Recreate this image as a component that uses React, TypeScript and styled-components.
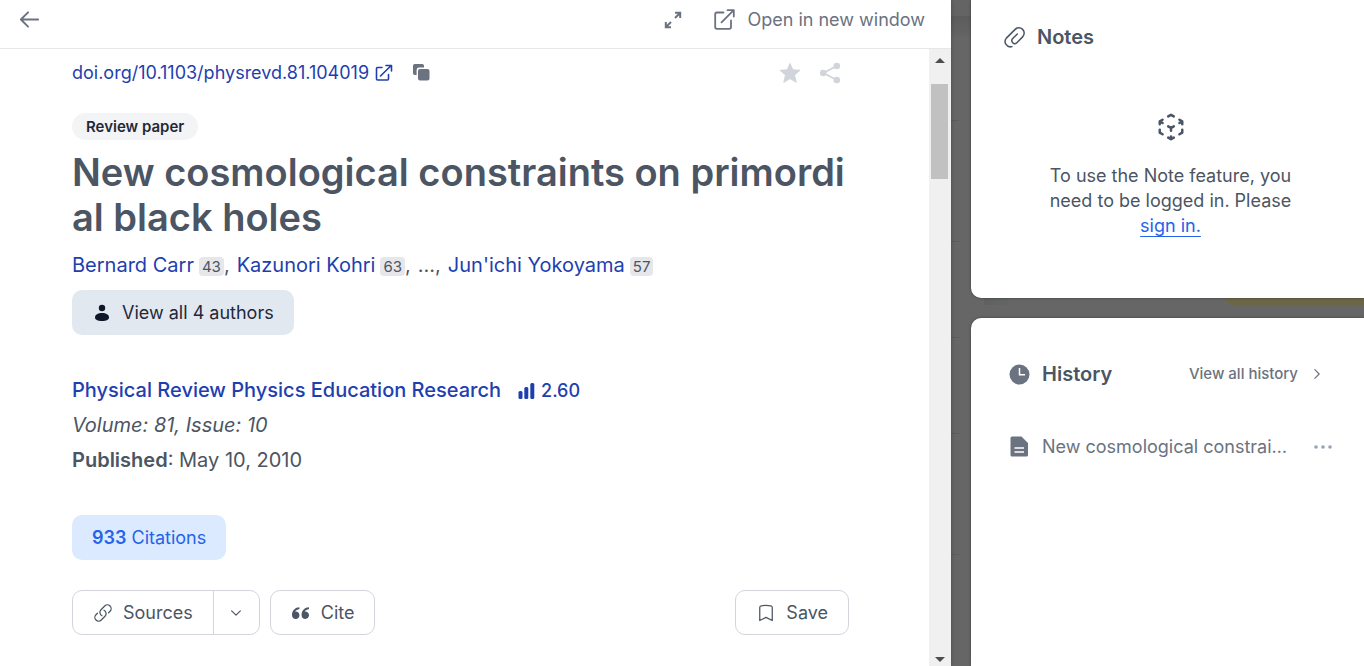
import React from "react";
import styled, { createGlobalStyle, css } from "styled-components";
import {
  HiOutlineArrowLeft,
  HiOutlineBookmark,
  HiOutlineChevronDown,
  HiOutlineChevronRight,
  HiOutlineCubeTransparent,
  HiOutlineLink,
} from "react-icons/hi2";
import { ImQuotesLeft } from "react-icons/im";

const color = {
  text: "#4b5563",
  muted: "#6b7280",
  faint: "#d1d5db",
  link: "#1e40af",
  blue: "#2563eb",
  backdrop: "#666666",
};

const GlobalStyle = createGlobalStyle`
  *, *::before, *::after { box-sizing: border-box; }
  body {
    margin: 0;
    background: ${color.backdrop};
    color: ${color.text};
    font-family: Inter, "Liberation Sans", sans-serif;
    font-size: 18px;
    line-height: 25px;
  }
  h1, h2, p, ul { margin: 0; padding: 0; }
  ul { list-style: none; }
  a { color: inherit; text-decoration: none; }
  button { font: inherit; color: inherit; cursor: pointer; }
  svg { display: block; flex: none; }
`;

const Page = styled.div`
  position: relative;
  height: 100vh;
  overflow: hidden;
`;

const Backdrop = styled.div`
  position: absolute;
  inset: 0;
`;

const BackdropHeader = styled.div`
  height: 36px;
  border-top: 16px solid #646464;
  background: linear-gradient(#5c5c5c, #636464);
`;

const BackdropBody = styled.div`
  display: grid;
  grid-template-columns: minmax(0, 1fr) 380px;
`;

const BackdropRows = styled.div`
  margin-right: 25px;
`;

const BackdropRow = styled.div<{ $height: number }>`
  height: ${(p) => p.$height}px;
  border-bottom: 1px solid #5c5c5c;
`;

const BackdropAside = styled.div`
  display: flex;
  justify-content: flex-end;
  align-items: flex-end;
  height: 269px;
  background: linear-gradient(90deg, #606060, #636565 24px, #666666 25px);
`;

const BackdropBanner = styled.div`
  width: 141px;
  height: 44px;
  border-radius: 12px 0 0 12px;
  background: #6b6746;
`;

const Layout = styled.div`
  position: relative;
  display: grid;
  grid-template-columns: minmax(0, 1fr) 393px;
  gap: 20px;
  height: 100%;
`;

const Reader = styled.main`
  display: flex;
  flex-direction: column;
  min-height: 0;
  background: #fff;
  box-shadow: 0 0 4px rgba(0, 0, 0, 0.3);
`;

const TopBar = styled.header`
  display: flex;
  flex: none;
  align-items: center;
  justify-content: space-between;
  height: 49px;
  padding: 0 26px 9px 18px;
  border-bottom: 1px solid #e5e7eb;
  color: ${color.muted};
`;

const TopActions = styled.div`
  display: flex;
  align-items: center;
  gap: 32px;
`;

const IconButton = styled.button<{ $color?: string }>`
  display: flex;
  align-items: center;
  padding: 0;
  border: 0;
  background: none;
  color: ${(p) => p.$color ?? "inherit"};
`;

const WindowLink = styled.a`
  display: flex;
  align-items: center;
  gap: 12px;
`;

const ReaderBody = styled.div`
  display: flex;
  flex: 1;
  min-height: 0;
`;

const Article = styled.article`
  flex: 1;
  min-width: 0;
  overflow: hidden;
  padding: 11px 80px 0 72px;
`;

const ScrollTrack = styled.div`
  display: flex;
  flex-direction: column;
  align-items: center;
  width: 22px;
  padding: 9px 3px 4px 2px;
  background: #f0f0f0;
`;

const ScrollThumb = styled.div`
  width: 17px;
  height: 95px;
  margin: 21px 0 auto;
  background: #c1c1c1;
`;

const ScrollArrow = styled.div<{ $down?: boolean }>`
  border: 5px solid transparent;
  ${(p) =>
    p.$down
      ? css`border-top-color: #4d4d4d; border-bottom-width: 0;`
      : css`border-bottom-color: #4d4d4d; border-top-width: 0;`}
`;

const DoiRow = styled.div`
  display: flex;
  align-items: center;
  justify-content: space-between;
  padding-right: 8px;
`;

const Inline = styled.div<{ $gap: number }>`
  display: flex;
  align-items: center;
  gap: ${(p) => p.$gap}px;
`;

const DoiLink = styled.a`
  display: flex;
  align-items: center;
  gap: 6px;
  color: ${color.link};
`;

const Tools = styled.div`
  display: flex;
  gap: 18px;
  color: ${color.faint};
`;

const Tag = styled.span`
  display: inline-block;
  margin-top: 28px;
  padding: 0 14px;
  border-radius: 14px;
  background: #f3f4f6;
  color: #1f2937;
  font-size: 15px;
  font-weight: 600;
  line-height: 27px;
  vertical-align: top;
`;

const Title = styled.h1`
  margin-top: 10px;
  font-size: 38px;
  font-weight: 600;
  line-height: 45px;
  word-break: break-all;
`;

const Authors = styled.p`
  display: flex;
  align-items: center;
  margin-top: 10px;
  font-size: 20px;
  line-height: 30px;
`;

const Author = styled.a`
  color: ${color.link};
`;

const Count = styled.span`
  margin: 2px 0 0 5px;
  padding: 0 3px;
  border-radius: 4px;
  background: #e5e7eb;
  font-size: 15px;
  line-height: 19px;
`;

const Separator = styled.span`
  margin-right: 7px;
`;

const Button = styled.button<{ $tone?: "slate" | "blue" }>`
  display: flex;
  align-items: center;
  gap: 10px;
  height: 45px;
  padding: 0 20px;
  border: 1px solid ${color.faint};
  border-radius: 10px;
  background: #fff;
  ${(p) =>
    p.$tone === "slate" &&
    css`
      margin-top: 10px;
      border: 0;
      background: #e2e8f0;
      color: #1e293b;
    `}
  ${(p) =>
    p.$tone === "blue" &&
    css`
      margin-top: 37px;
      border: 0;
      background: #dbeafe;
      color: ${color.blue};
    `}
`;

const IconSlot = styled.span`
  display: flex;
  justify-content: center;
  width: 20px;
`;

const Strong = styled.strong`
  font-weight: 600;
`;

const Journal = styled.div`
  margin-top: 38px;
  font-size: 20px;
  line-height: 35px;
`;

const JournalRow = styled.div`
  display: flex;
  align-items: center;
  gap: 17px;
  color: ${color.link};
  font-weight: 500;
`;

const Impact = styled.span`
  display: flex;
  align-items: center;
  gap: 6px;
  font-size: 18px;
`;

const Actions = styled.div`
  display: flex;
  justify-content: space-between;
  margin-top: 30px;
`;

const Split = styled.div`
  display: flex;
`;

const SourcesButton = styled(Button)`
  border-radius: 10px 0 0 10px;
`;

const MoreButton = styled(Button)`
  width: 47px;
  justify-content: center;
  margin-left: -1px;
  padding: 0;
  border-radius: 0 10px 10px 0;
`;

const Side = styled.aside`
  display: flex;
  flex-direction: column;
  gap: 20px;
  min-height: 0;
`;

const Panel = styled.section<{ $bottom?: boolean }>`
  background: #fff;
  box-shadow: 0 0 3px rgba(0, 0, 0, 0.4);
  ${(p) =>
    p.$bottom
      ? css`flex: 1; padding: 41px 32px 0 38px; border-radius: 10px 0 0 0;`
      : css`padding: 22px 32px 60px; border-radius: 0 0 0 10px;`}
`;

const PanelHead = styled.div<{ $gap: number }>`
  display: flex;
  align-items: center;
  gap: ${(p) => p.$gap}px;
  line-height: 30px;
  color: ${color.muted};
`;

const PanelTitle = styled.h2`
  flex: 1;
  color: ${color.text};
  font-size: 20px;
  font-weight: 600;
`;

const SignInNote = styled.div`
  display: flex;
  flex-direction: column;
  align-items: center;
  gap: 21px;
  margin: 60px 18px 0 24px;
  text-align: center;
`;

const SignIn = styled.a`
  display: block;
  color: ${color.blue};
  text-decoration: underline;
  text-underline-offset: 4px;
`;

const HistoryLink = styled.a`
  display: flex;
  align-items: center;
  gap: 12px;
  margin-right: 8px;
  font-size: 15px;
  font-weight: 500;
`;

const HistoryItem = styled.li`
  display: flex;
  align-items: center;
  gap: 12px;
  margin-top: 45px;
  color: ${color.muted};
`;

const HistoryName = styled.a`
  width: 250px;
  overflow: hidden;
  white-space: nowrap;
  text-overflow: ellipsis;
`;

const MenuButton = styled(IconButton)`
  margin-left: auto;
`;

const stroke = { fill: "none", stroke: "currentColor", strokeLinecap: "round", strokeLinejoin: "round" } as const;

const ExpandIcon = () => (
  <svg width="18" height="18" viewBox="0 0 18 18" fill="none" stroke="currentColor" strokeWidth="2">
    <path d="M11 1.800H16.200V7M16 2 11 7M1.800 11V16.200H7M2 16 7 11" />
  </svg>
);

const WindowIcon = () => (
  <svg width="21" height="21" viewBox="0 0 21 21" {...stroke} strokeWidth="1.8">
    <path d="M9.500 3.500H3a1.800 1.800 0 0 0-1.800 1.800V18A1.800 1.800 0 0 0 3 19.800H15.200A1.800 1.800 0 0 0 17 18V11.500M7.500 13.300 19.500 1.300M13.500 1.200H19.800V7.500" />
  </svg>
);

const DoiIcon = () => (
  <svg width="18" height="18" viewBox="0 0 18 18" {...stroke} strokeWidth="1.6">
    <path d="M7 3.500H2.500A1 1 0 0 0 1.500 4.500V15A1 1 0 0 0 2.500 16H12.500A1 1 0 0 0 13.500 15V10.500M5.500 12 16.200 1.500M11 1.500H16.500V7" />
  </svg>
);

const CopyIcon = () => (
  <svg width="17" height="17" viewBox="0 0 17 17" fill="currentColor">
    <path d="M1.800 0H9.200A1.800 1.800 0 0 1 11 1.800V3.600H6A2.400 2.400 0 0 0 3.600 6V11H1.800A1.800 1.800 0 0 1 0 9.200V1.800A1.800 1.800 0 0 1 1.800 0Z" />
    <rect x="5" y="5" width="11.500" height="11.500" rx="2" />
  </svg>
);

const StarIcon = () => (
  <svg width="22" height="22" viewBox="0 0 22 22" fill="currentColor" stroke="currentColor" strokeLinejoin="round">
    <path d="M11 1.500 13.800 7.800 21 8.300 15.500 13 17.200 20.300 11 16.600 4.800 20.300 6.500 13 1 8.300 8.200 7.800Z" />
  </svg>
);

const ShareIcon = () => (
  <svg width="22" height="22" viewBox="0 0 22 22" fill="currentColor">
    <path d="M4.500 11 17.500 4M4.500 11 17.500 18" stroke="currentColor" strokeWidth="1.8" />
    <circle cx="4.200" cy="11" r="3.300" />
    <circle cx="17.800" cy="4" r="3.300" />
    <circle cx="17.800" cy="18" r="3.300" />
  </svg>
);

const PersonIcon = () => (
  <svg width="18" height="18" viewBox="0 0 18 18" fill="#0f172a">
    <circle cx="9" cy="4" r="3.200" />
    <path d="M2 13.500C2 10.500 5 9 9 9S16 10.500 16 13.500C16 15.800 13.500 17 9 17S2 15.800 2 13.500Z" />
  </svg>
);

const BarsIcon = () => (
  <svg width="17" height="19" viewBox="0 0 17 19" fill="currentColor">
    <rect x="0.500" y="10" width="4" height="8" rx="1.500" />
    <rect x="6.300" y="6" width="4" height="12" rx="1.500" />
    <rect x="12.300" y="2" width="4" height="16" rx="1.500" />
  </svg>
);

const ClipIcon = () => (
  <svg width="23" height="23" viewBox="-11.500 -11.500 23 23" {...stroke} strokeWidth="1.5" color={color.text}>
    <path
      transform="rotate(45)"
      d="M4.600 8.300A5.300 5.300 0 0 1-5.300 6.200V-6.200A5.300 5.300 0 0 1 5.300-6.200V2A2.900 2.900 0 0 1-0.500 2V-4.500"
    />
  </svg>
);

const ClockIcon = () => (
  <svg width="21" height="21" viewBox="0 0 21 21">
    <circle cx="10.500" cy="10.500" r="10" fill="currentColor" />
    <path d="M10.500 4V10.800H16" fill="none" stroke="#fff" strokeWidth="1.5" />
  </svg>
);

const DocumentIcon = () => (
  <svg width="21" height="21" viewBox="0 0 21 21">
    <path
      d="M3 0.500H12.500L19 7V19A1.500 1.500 0 0 1 17.500 20.500H3A1.500 1.500 0 0 1 1.500 19V2A1.500 1.500 0 0 1 3 0.500Z"
      fill="currentColor"
    />
    <path d="M5.500 12H15M5.500 16H15" stroke="#fff" strokeWidth="1.5" />
  </svg>
);

const DotsIcon = () => (
  <svg width="18" height="4" viewBox="0 0 18 4" fill="currentColor">
    <circle cx="2" cy="2" r="1.800" />
    <circle cx="9" cy="2" r="1.800" />
    <circle cx="16" cy="2" r="1.800" />
  </svg>
);

export default function App() {
  return (
    <Page>
      <GlobalStyle />
      <Backdrop aria-hidden="true">
        <BackdropHeader />
        <BackdropBody>
          <BackdropRows>
            {[85, 121, 96, 96, 121].map((height, i) => (
              <BackdropRow key={i} $height={height} />
            ))}
          </BackdropRows>
          <BackdropAside>
            <BackdropBanner />
          </BackdropAside>
        </BackdropBody>
      </Backdrop>
      <Layout>
        <Reader>
          <TopBar>
            <IconButton aria-label="Back">
              <HiOutlineArrowLeft size={23} strokeWidth={2} />
            </IconButton>
            <TopActions>
              <IconButton aria-label="Expand">
                <ExpandIcon />
              </IconButton>
              <WindowLink href="#window">
                <WindowIcon />
                Open in new window
              </WindowLink>
            </TopActions>
          </TopBar>
          <ReaderBody>
            <Article>
              <DoiRow>
                <Inline $gap={20}>
                  <DoiLink href="#doi">
                    doi.org/10.1103/physrevd.81.104019
                    <DoiIcon />
                  </DoiLink>
                  <IconButton aria-label="Copy" $color={color.muted}>
                    <CopyIcon />
                  </IconButton>
                </Inline>
                <Tools>
                  <IconButton aria-label="Favourite">
                    <StarIcon />
                  </IconButton>
                  <IconButton aria-label="Share">
                    <ShareIcon />
                  </IconButton>
                </Tools>
              </DoiRow>
              <Tag>Review paper</Tag>
              <Title>New cosmological constraints on primordial black holes</Title>
              <Authors>
                <Author href="#carr">Bernard Carr</Author>
                <Count>43</Count>
                <Separator>,</Separator>
                <Author href="#kohri">Kazunori Kohri</Author>
                <Count>63</Count>
                <Separator>,</Separator>
                <Separator>...,</Separator>
                <Author href="#yokoyama">Jun'ichi Yokoyama</Author>
                <Count>57</Count>
              </Authors>
              <Button $tone="slate">
                <IconSlot>
                  <PersonIcon />
                </IconSlot>
                View all 4 authors
              </Button>
              <Journal>
                <JournalRow>
                  <a href="#journal">Physical Review Physics Education Research</a>
                  <Impact>
                    <BarsIcon />
                    2.60
                  </Impact>
                </JournalRow>
                <p>
                  <em>Volume: 81, Issue: 10</em>
                </p>
                <p>
                  <Strong>Published</Strong>: May 10, 2010
                </p>
              </Journal>
              <Button $tone="blue">
                <span>
                  <Strong>933</Strong> Citations
                </span>
              </Button>
              <Actions>
                <Inline $gap={10}>
                  <Split>
                    <SourcesButton>
                      <HiOutlineLink size={20} />
                      Sources
                    </SourcesButton>
                    <MoreButton aria-label="More sources">
                      <HiOutlineChevronDown size={14} strokeWidth={2} />
                    </MoreButton>
                  </Split>
                  <Button>
                    <IconSlot>
                      <ImQuotesLeft size={17} />
                    </IconSlot>
                    Cite
                  </Button>
                </Inline>
                <Button>
                  <HiOutlineBookmark size={20} />
                  Save
                </Button>
              </Actions>
            </Article>
            <ScrollTrack aria-hidden="true">
              <ScrollArrow />
              <ScrollThumb />
              <ScrollArrow $down />
            </ScrollTrack>
          </ReaderBody>
        </Reader>
        <Side>
          <Panel>
            <PanelHead $gap={11}>
              <ClipIcon />
              <PanelTitle>Notes</PanelTitle>
            </PanelHead>
            <SignInNote>
              <HiOutlineCubeTransparent size={30} strokeWidth={2} />
              <p>
                To use the Note feature, you need to be logged in. Please <SignIn href="#signin">sign in.</SignIn>
              </p>
            </SignInNote>
          </Panel>
          <Panel $bottom>
            <PanelHead $gap={12}>
              <ClockIcon />
              <PanelTitle>History</PanelTitle>
              <HistoryLink href="#history">
                View all history
                <HiOutlineChevronRight size={14} strokeWidth={2} />
              </HistoryLink>
            </PanelHead>
            <ul>
              <HistoryItem>
                <DocumentIcon />
                <HistoryName href="#paper">New cosmological constraints on primordial black holes</HistoryName>
                <MenuButton aria-label="More" $color="#94a3b8">
                  <DotsIcon />
                </MenuButton>
              </HistoryItem>
            </ul>
          </Panel>
        </Side>
      </Layout>
    </Page>
  );
}
